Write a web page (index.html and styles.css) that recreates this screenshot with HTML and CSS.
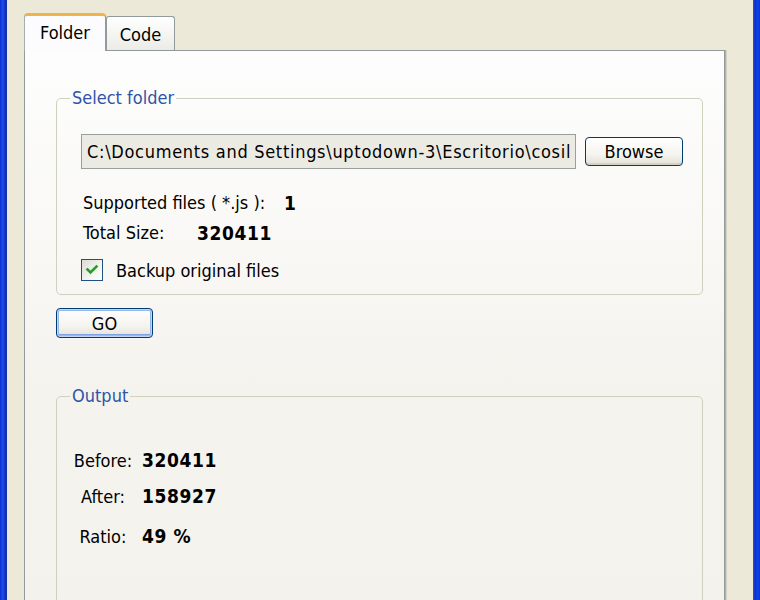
FILE: index.html
```html
<!DOCTYPE html>
<html>
<head>
<meta charset="utf-8">
<link rel="stylesheet" href="styles.css">
</head>
<body>
<div class="frame">
  <div class="edge edge-left"></div>
  <div class="client">
    <div class="tabs">
      <div class="tab tab-active">Folder</div>
      <div class="tab">Code</div>
    </div>
    <div class="panel">
      <fieldset class="group group-select">
        <legend>Select folder</legend>
        <div class="path-row">
          <div class="textbox">C:\Documents and Settings\uptodown-3\Escritorio\cosil</div>
          <button class="btn btn-browse">Browse</button>
        </div>
        <div class="info-row row-files"><span class="lbl lbl-files">Supported files ( *.js ):</span><b class="val">1</b></div>
        <div class="info-row"><span class="lbl lbl-size">Total Size:</span><b class="val">320411</b></div>
        <label class="check-row">
          <span class="checkbox"><svg width="14" height="14" viewBox="0 0 14 14"><path d="M2.5 6.5 L5.5 9.5 L11.5 3.5" fill="none" stroke="#21a121" stroke-width="2.6" stroke-linecap="square"/></svg></span>
          <span>Backup original files</span>
        </label>
      </fieldset>
      <button class="btn btn-go">GO</button>
      <fieldset class="group group-output">
        <legend>Output</legend>
        <div class="out-grid">
          <span class="out-lbl">Before:</span><b class="out-val">320411</b>
          <span class="out-lbl">After:</span><b class="out-val">158927</b>
          <span class="out-lbl out-ratio">Ratio:</span><b class="out-val out-ratio">49 %</b>
        </div>
      </fieldset>
    </div>
  </div>
  <div class="edge edge-right"></div>
</div>
</body>
</html>
```
FILE: styles.css
```css
* { box-sizing: border-box; }
html, body { margin: 0; padding: 0; }
body {
  background: #ECE9D8;
  font-family: "DejaVu Sans Condensed", "DejaVu Sans", sans-serif;
  font-size: 18px;
  color: #000;
}
.frame {
  display: flex;
  width: 760px;
  height: 600px;
  overflow: hidden;
}
.edge { flex: none; }
.edge-left {
  width: 7px;
  background: linear-gradient(to right, #0a2fd0 0, #1f4fe8 40%, #0a2cc4 80%, #1a3a9c 100%);
}
.edge-right {
  width: 8px;
  background: linear-gradient(to right, #3d5bb8 0, #0b2fd2 25%, #1044e6 60%, #0a2cc0 100%);
}
.client {
  flex: 1;
  display: flex;
  flex-direction: column;
  padding: 13px 28px 0 17px;
  background: #ECE9D8;
}
.tabs {
  display: flex;
  align-items: flex-end;
  height: 38px;
  margin-bottom: -1px;
  position: relative;
  z-index: 1;
}
.tab {
  height: 34px;
  width: 69px;
  border: 1px solid #919B9C;
  border-bottom: none;
  border-radius: 3px 3px 0 0;
  background: linear-gradient(#ffffff, #ECEBE6);
  display: flex;
  align-items: center;
  justify-content: center;
  padding-top: 2px;
  margin-bottom: 1px;
}
.tab-active {
  width: 82px;
  height: 38px;
  background: #fcfcfe;
  border-top: 3px solid #F2B24A;
  border-left-color: #A5ADB0;
  margin-bottom: 0;
  padding-top: 0;
  padding-bottom: 2px;
  border-radius: 4px 4px 0 0;
}
.panel {
  flex: 1;
  min-height: 620px;
  border: 1px solid #919B9C;
  background: linear-gradient(to bottom, #fdfdfd 0, #f9f8f5 200px, #F4F3EE 330px, #F3F2EC 100%);
  box-shadow: 1px 0 0 #B6B3A4, 2px 0 0 #D4D1C2;
  padding: 36px 21px 0 31px;
}
.group {
  margin: 0;
  border: 1px solid #D0D0BF;
  border-radius: 5px;
  min-width: 0;
}
.group legend {
  color: #2F54A8;
  padding: 0 2px;
  line-height: 22px;
}
.group-select {
  padding: 25px 19px 9px 24px;
}
.group-select legend { margin-left: -11px; }
.path-row {
  display: flex;
  align-items: center;
  gap: 9px;
}
.textbox {
  width: 495px;
  height: 35px;
  border: 1px solid #9A9E9F;
  background: #ECEBE3;
  padding: 0 5px;
  line-height: 33px;
  letter-spacing: 0.7px;
  white-space: nowrap;
  overflow: hidden;
}
.btn {
  font: inherit;
  color: #000;
  border: 1px solid #003C74;
  border-radius: 4px;
  background: linear-gradient(#ffffff 0, #F5F4EF 60%, #E3E0D6 100%);
  box-shadow: inset 0 -2px 0 #D6D0C5;
  padding: 0;
}
.btn-browse {
  width: 98px;
  height: 29px;
}
.info-row {
  height: 30px;
  line-height: 30px;
  padding-left: 2px;
  display: flex;
}
.row-files { margin-top: 19px; }
.lbl { display: inline-block; }
.lbl-files { width: 201px; }
.lbl-size { width: 114px; }
.val { font-weight: bold; font-size: 19px; letter-spacing: 0.6px; }
.check-row {
  margin-top: 7px;
  height: 30px;
  display: flex;
  align-items: center;
  gap: 13px;
}
.checkbox {
  width: 22px;
  height: 22px;
  border: 1px solid #1C5180;
  background: linear-gradient(135deg, #DCDCD7 0, #F4F4F0 60%, #ffffff 100%);
  display: flex;
  align-items: center;
  justify-content: center;
}
.btn-go {
  display: block;
  margin-top: 13px;
  width: 97px;
  height: 30px;
  box-shadow: inset 0 0 0 1px #C4D6F5, inset 0 0 0 2px #98B8EA, inset 0 -3px 0 #7FA2E2;
}
.group-output {
  margin-top: 47px;
  height: 260px;
  padding: 35px 10px 0 15px;
}
.group-output legend { margin-left: -2px; }
.out-grid {
  display: grid;
  grid-template-columns: 62px auto;
  column-gap: 8px;
  grid-auto-rows: 36px;
  align-items: center;
  justify-items: start;
}
.out-lbl { justify-self: center; }
.out-val { font-weight: bold; font-size: 19px; letter-spacing: 0.6px; }
.out-ratio { margin-top: 8px; }
```
